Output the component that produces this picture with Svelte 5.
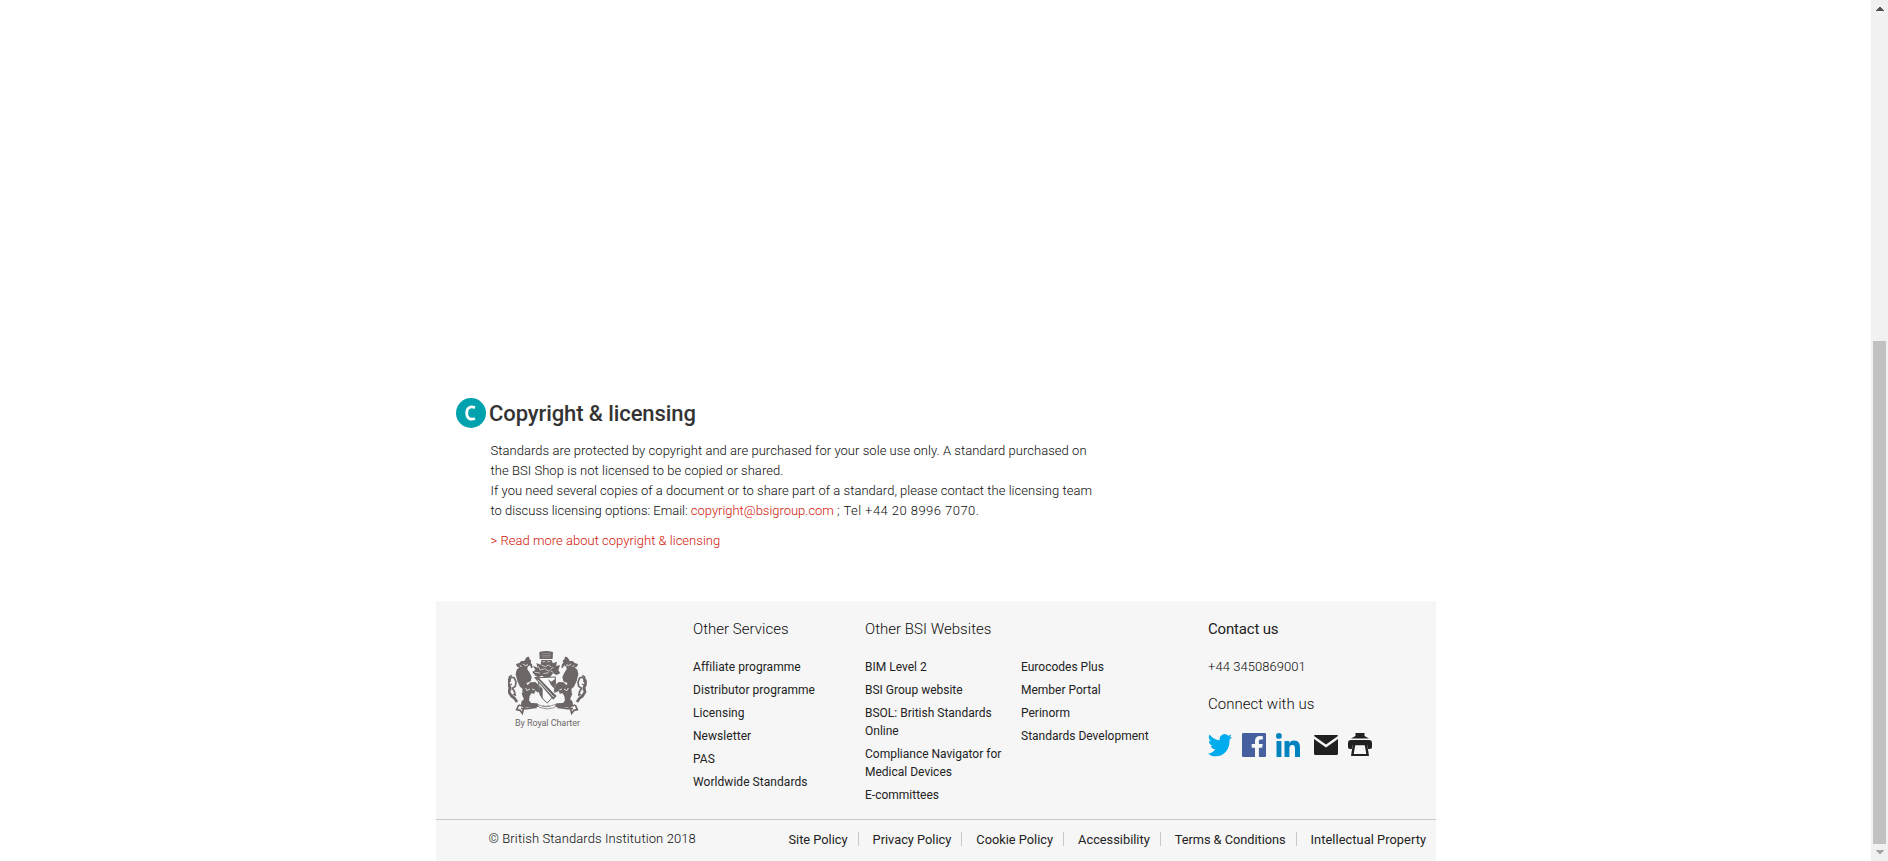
<script>
  const services = ['Affiliate programme', 'Distributor programme', 'Licensing', 'Newsletter', 'PAS', 'Worldwide Standards'];
  const sites = ['BIM Level 2', 'BSI Group website', 'BSOL: British Standards Online', 'Compliance Navigator for Medical Devices', 'E-committees'];
  const moreSites = ['Eurocodes Plus', 'Member Portal', 'Perinorm', 'Standards Development'];
  const policies = ['Site Policy', 'Privacy Policy', 'Cookie Policy', 'Accessibility', 'Terms & Conditions', 'Intellectual Property'];
</script>

{#snippet list(items)}
  <ul>
    {#each items as item}
      <li>{item}</li>
    {/each}
  </ul>
{/snippet}

{#snippet supporter()}
  <path d="M48 102l3-13 8-7-7-2-3-8 10-3 6-6 9 0 3-6 5-6 6-1 2 8 5 4-2 6 4 5 2 10-5 1-3-8-7 4-1 8 7 10 6 13-3 13-9 4-4 0 4 8 8-9 15-1 10 9 4 13-5 10-9-6-3 9-9-1-5 9-2 12 6 8 19 1 5 8-10 5-26-1-9 3-9-8 1-11 7-10-6-15 3-14-8-7-8-17z" />
  <path d="M33 112c-7 9-9 21-2 30l-3 14 8 13 8 5 8 12" fill="none" stroke="#6d6666" stroke-width="8" />
  <path d="M34 111l10 3 5 12-2 13-9 6 6 9 3 14" fill="none" stroke="#6d6666" stroke-width="5" />
  <path d="M27 112l9-6m-12 15l10 3m-6 12l9-4m-11 20l9-3m0 19l10-6" stroke="#6d6666" stroke-width="4" />
  <path d="M70 72l7 5 8-3M60 76l6 4M78 144l4 8 9-5m-30 36 12-7m24-29 8 3M62 162l8-7" fill="none" stroke="#f6f6f6" stroke-width="2.500" />
  <path d="M57 195c10 5 23 1 41-3l19 6M64 205c16 3 27-2 47-3M57 195l-6 14 10 2 7 9 4-15" fill="none" stroke="#6d6666" stroke-width="5" />
{/snippet}

<div class="page">
  <main>
    <section class="copyright">
      <h2>
        <svg class="badge" width="30" height="30" viewBox="0 0 30 30">
          <circle cx="15" cy="15" r="15" fill="#00a3ad" />
          <path d="M19 9.600C14.500 8 10.700 9.400 10.700 15s3.600 7.200 8.300 5.500" fill="none" stroke="#fff" stroke-width="2.800" />
        </svg>
        <span>Copyright &amp; licensing</span>
      </h2>
      <div class="body">
        <p>
          <span class="l1">Standards are protected by copyright and are purchased for your sole use only. A standard purchased on</span><br />
          <span class="l1">the BSI Shop is not licensed to be copied or shared.</span><br />
          <span class="l3">If you need several copies of a document or to share part of a standard, please contact the licensing team</span><br />
          <span class="l4">to discuss licensing options: Email: <a>copyright@bsigroup.com</a> <span class="tel">; Tel +44 20 8996 7070.</span></span>
        </p>
        <p class="more"><a>&gt; Read more about copyright &amp; licensing</a></p>
      </div>
    </section>

    <footer>
      <div class="columns">
        <div class="charter">
          <svg width="79" height="66" viewBox="25 30 237 198">
            <g fill="#6d6666">
              {@render supporter()}
              <g transform="matrix(-1 0 0 1 284 0)">{@render supporter()}</g>
              <path d="M119 36q21-6 41 0l-1 21h-39z" />
              <path d="M126 40h27M126 46h28M126 51h26" stroke="#a39d9d" stroke-width="2" />
              <path d="M125 60h30l5 10 12-5-3 13 12-3-5 16 6 8-11 6-11-5-8 10-14 3-12-6-10 5-9-5-9-11 9-6-7-13 14 6-4-14 13 5z" />
              <path d="M128 65h9m6 0h8m-26 10 12 5 9-5 9 6m-40-3 7 12 13-4 13 8 13-13m-55 16 15 2m10 2 16-3m7-4 7 3" stroke="#d9d7d7" stroke-width="2.500" fill="none" />
              <path d="M117 113l50-2q5 54-24 78-30-18-26-76z" fill="#fafafa" stroke="#6d6666" stroke-width="3" />
              <path d="M103 112l12-2 56 58-10 11zM119 135l10 12v31l-10-15zM145 117l10 8 12-9-2 31-11-12z" />
              <path d="M114 119l48 52M122 116l44 46" stroke="#fff" stroke-width="2.500" />
              <path d="M113 193q27 13 57-1l-6 11q-22 8-45-1z" fill="#fafafa" stroke="#6d6666" stroke-width="2" />
              <path d="M128 200l5-3 5 5 6-5 7 4" fill="none" stroke="#6d6666" stroke-width="2" />
            </g>
          </svg>
          <span>By Royal Charter</span>
        </div>
        <div class="services">
          <h3>Other Services</h3>
          {@render list(services)}
        </div>
        <div class="sites">
          <h3>Other BSI Websites</h3>
          {@render list(sites)}
        </div>
        <div class="more-sites">{@render list(moreSites)}</div>
        <div class="contact">
          <h3 class="dark">Contact us</h3>
          <p class="phone">+44 3450869001</p>
          <h3 class="connect">Connect with us</h3>
          <div class="social">
            <svg width="24" height="24" viewBox="0 0 24 24"><path fill="#00aced" d="M24 3.800a9 9 0 0 1-2.800.8A5 5 0 0 0 23.300 1.500a9 9 0 0 1-3.100 1.300A4.900 4.900 0 0 0 11.800 7.300 14 14 0 0 1 1.600 1.500a5 5 0 0 0 1.500 6.900A5 5 0 0 1 .9 7.700a5 5 0 0 0 3.900 4.900 5 5 0 0 1-2.200.1 5 5 0 0 0 4.600 3.500A10 10 0 0 1 0 20.700c2.200 1.700 4.800 2.600 7.500 2.600C16.600 23.300 22 15.700 21.500 6.800A10 10 0 0 0 24 3.800z" /></svg>
            <svg width="24" height="24" viewBox="0 0 24 24"><rect width="24" height="24" rx="1.300" fill="#465f9e" /><path fill="#f6f6f6" d="M13 24v-9.300H9.700v-3.700H13V8c0-3.300 2-5 4.900-5l3 .2v3.400h-2c-1.600 0-2 .8-2 1.900V11h3.800l-.5 3.700h-3.300V24z" /></svg>
            <svg width="24" height="24" viewBox="0 0 24 24"><path fill="#0083be" d="M.5 8h4.900v16H.5zM2.900 0a2.900 2.900 0 1 1 0 5.800 2.900 2.900 0 0 1 0-5.800zM8.500 8h4.700v2.200c.9-1.700 2.600-2.600 4.700-2.600 5 0 6.100 3.200 6.100 7.600V24h-5v-7.800c0-1.900 0-4.300-2.600-4.300s-3 2-3 4.100v8H8.500z" /></svg>
            <svg class="mail" width="24" height="24" viewBox="0 0 24 24"><path fill="#202020" d="M1 2h22q1 0 1 1L12 11.500 0 3q0-1 1-1zM0 6l12 8.500L24 6v14.500q0 1.500-1.500 1.500h-21Q0 22 0 20.500z" /></svg>
            <svg width="24" height="24" viewBox="0 0 24 24"><path fill="#202020" d="M7.500 0h9v3L21 5.500H3L7.500 3zM3 7h18q3 0 3 3v4q0 2-2 2h-1.800l-1.400-5.500H5.200L3.800 16H2q-2 0-2-2v-4q0-3 3-3z" /><path fill="#202020" fill-rule="evenodd" d="M5 10h14l2 13H3zM7.200 12.200 5.700 21h12.600l-1.500-8.800z" /></svg>
          </div>
        </div>
      </div>
      <div class="bottom">
        <span class="legal">© British Standards Institution 2018</span>
        <nav>
          {#each policies as policy}
            <span>{policy}</span>
          {/each}
        </nav>
      </div>
    </footer>
  </main>
  <aside class="scrollbar">
    <svg width="17" height="17" viewBox="0 0 17 17"><path fill="#505050" d="M8 7h2v1h1v1h1v1h1v1H5v-1h1V9h1V8h1z" /></svg>
    <div class="thumb"></div>
    <svg width="17" height="17" viewBox="0 0 17 17"><path fill="#a3a3a3" d="M5 6h8v1h-1v1h-1v1h-1v1H8V9H7V8H6V7H5z" /></svg>
  </aside>
</div>

<style>
  :global(body) {
    background: #fff;
    overflow: hidden;
  }
  .page {
    display: flex;
    justify-content: space-between;
    height: 861px;
    font-family: Roboto, "Open Sans", sans-serif;
    font-size: 13px;
    font-weight: 300;
    color: #0c0c0c;
  }
  h2, h3, p, ul { margin: 0; padding: 0; font-weight: inherit; }
  ul { list-style: none; }
  main {
    width: 1000px;
    margin-left: 436px;
    display: flex;
    flex-direction: column;
    justify-content: flex-end;
  }
  .copyright { height: 203px; padding-left: 20px; }
  h2 {
    display: flex;
    align-items: center;
    gap: 3px;
    height: 30px;
    font-size: 22px;
    font-weight: 500;
    line-height: 30px;
    letter-spacing: -0.09px;
    color: #333;
    white-space: nowrap;
  }
  h2 span { padding-top: 2px; }
  .body { padding: 13px 0 0 34.500px; line-height: 20px; white-space: nowrap; }
  .l1 { letter-spacing: 0.05px; }
  .l3 { letter-spacing: 0.035px; }
  .l4 { letter-spacing: -0.02px; }
  .tel { letter-spacing: 0.45px; }
  a { color: #d01408; }
  .more { margin-top: 10px; letter-spacing: 0.02px; }
  footer { height: 260px; background: #f6f6f6; }
  .columns { display: flex; height: 218px; box-sizing: border-box; }
  .charter {
    width: 79px;
    padding: 49px 105px 0 72px;
    display: flex;
    flex-direction: column;
    align-items: center;
    gap: 2px;
    font-size: 9px;
    font-weight: 400;
    line-height: 10px;
    color: #6d6868;
    white-space: nowrap;
  }
  .charter span { letter-spacing: -0.07px; }
  .services { width: 173px; }
  .sites { width: 156px; }
  .more-sites { width: 187px; padding-top: 38px; }
  .services, .sites, .contact { padding-top: 18px; }
  .services { padding-left: 1px; box-sizing: border-box; }
  h3 { font-size: 15px; line-height: 20px; letter-spacing: 0.03px; white-space: nowrap; }
  ul { padding-top: 19px; font-size: 12px; font-weight: 400; line-height: 18px; color: #222; }
  li { margin-bottom: 5px; max-width: 142px; }
  .services li { letter-spacing: 0.05px; }
  .dark { color: #222; font-weight: 400; letter-spacing: -0.18px; }
  .phone { padding-top: 19px; line-height: 18px; letter-spacing: 0.05px; }
  .connect { padding-top: 18px; }
  .social { display: flex; gap: 10px; padding-top: 19px; }
  .mail { margin-left: 4px; }
  .bottom {
    display: flex;
    justify-content: space-between;
    border-top: 1px solid #c8c8c8;
    padding: 12px 10px 0 52.500px;
    line-height: 14px;
    white-space: nowrap;
  }
  .legal { letter-spacing: 0.11px; }
  nav { display: flex; font-size: 12.800px; font-weight: 400; color: #222; }
  nav span { padding: 0 10px 0 14px; border-right: 1px solid #c8c8c8; height: 14px; line-height: 16px; }
  nav span:nth-child(5) { letter-spacing: -0.04px; }
  nav span:last-child { border: 0; padding-right: 0; letter-spacing: 0.06px; }
  .scrollbar {
    width: 17px;
    background: #f1f1f1;
    display: flex;
    flex-direction: column;
    justify-content: flex-end;
  }
  .scrollbar svg { display: block; }
  .scrollbar svg:first-child { margin-bottom: auto; }
  .thumb { width: 13px; height: 503px; margin-left: 2px; background: #c1c1c1; }
</style>
